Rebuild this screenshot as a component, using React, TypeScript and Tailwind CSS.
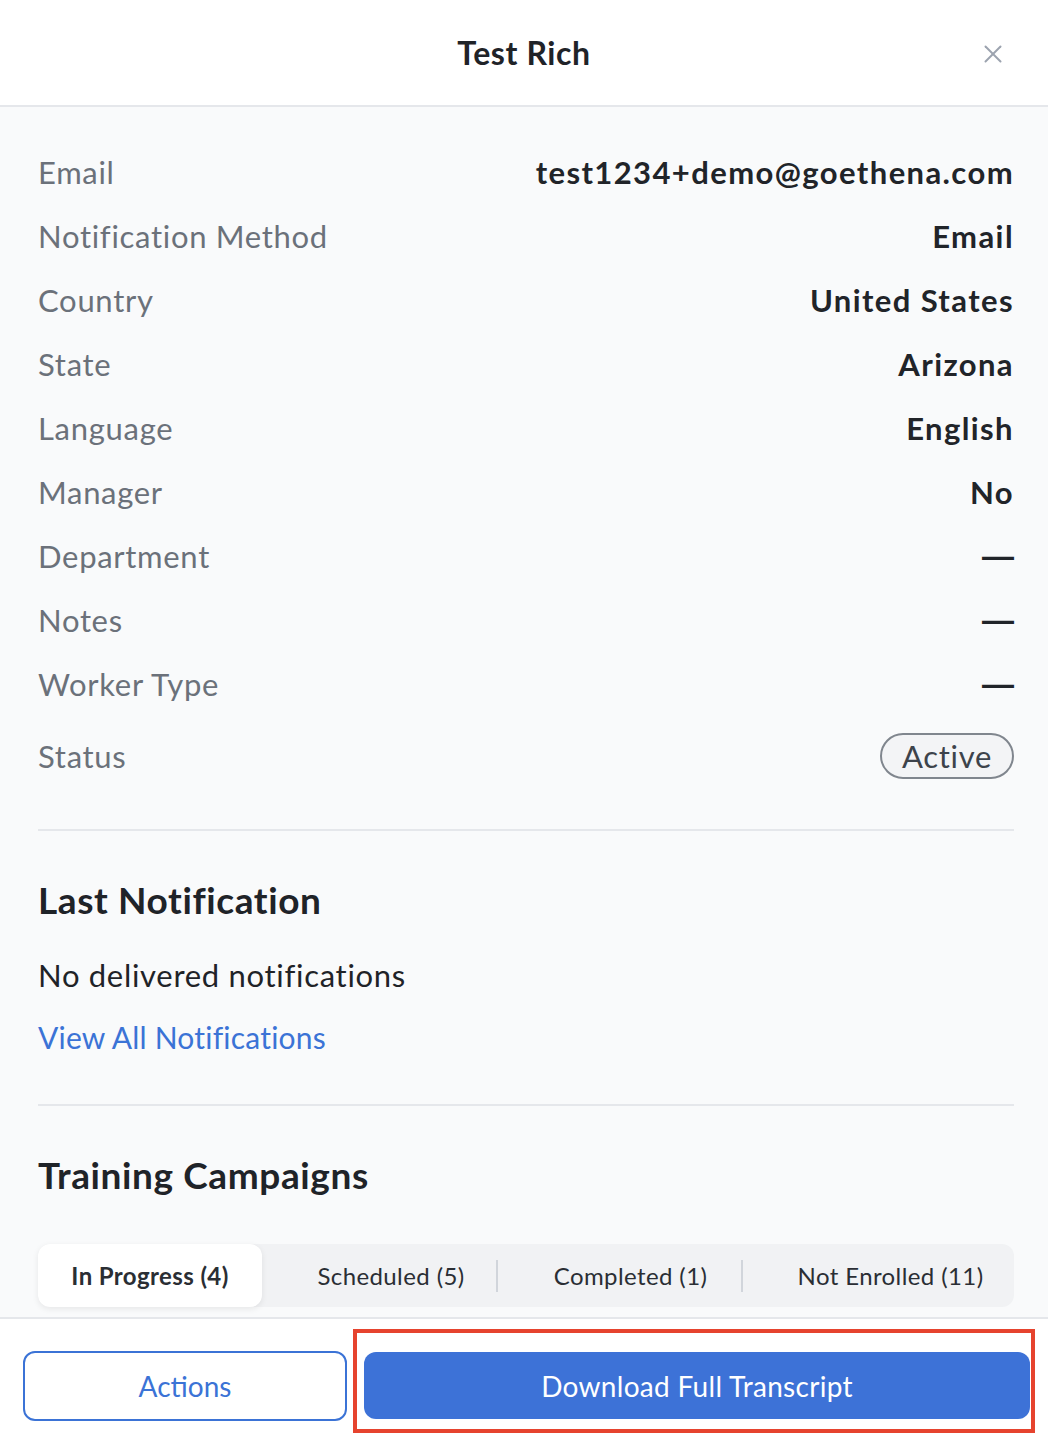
import { X } from 'lucide-react';

const rows: Array<{ label: string; value: string }> = [
  { label: 'Email', value: 'test1234+demo@goethena.com' },
  { label: 'Notification Method', value: 'Email' },
  { label: 'Country', value: 'United States' },
  { label: 'State', value: 'Arizona' },
  { label: 'Language', value: 'English' },
  { label: 'Manager', value: 'No' },
  { label: 'Department', value: '—' },
  { label: 'Notes', value: '—' },
  { label: 'Worker Type', value: '—' },
];

const font = { fontFamily: 'Lato, "Noto Sans", sans-serif' };

const App = () => {
  return (
    <div className="flex flex-col w-[1048px] h-[1442px] overflow-hidden bg-white" style={font}>
      {/* header */}
      <header className="relative flex items-center justify-center h-[107px] shrink-0 border-b-2 border-[#e5e7eb] bg-white">
        <h1 className="text-[32px] font-bold text-[#1f2328] tracking-[0.6px]">Test Rich</h1>
        <button className="absolute right-[40px] top-[39px] text-[#9ca3af]">
          <X size={30} strokeWidth={1.6} />
        </button>
      </header>

      {/* body */}
      <main className="flex-1 overflow-hidden bg-[#f9fafb] pl-[38px] pr-[34px] pt-[33px]">
        {rows.map((r) => (
          <div key={r.label} className="flex items-center justify-between h-16">
            <span className="text-[31px] tracking-[0.7px] text-[#6b717a]">{r.label}</span>
            {r.value === '—' ? (
              <span className="text-[32px] font-bold text-[#212429] font-['Liberation_Sans',sans-serif]">—</span>
            ) : (
              <span className="text-[31px] font-bold tracking-[1.4px] text-[#212429]">{r.value}</span>
            )}
          </div>
        ))}
        <div className="flex items-center justify-between h-20">
          <span className="text-[31px] tracking-[0.7px] text-[#6b717a]">Status</span>
          <span className="flex items-center h-[46px] px-[20px] rounded-full border-2 border-[#80868e] bg-[#f3f4f6] text-[31px] tracking-[0.7px] text-[#3d434b]">
            Active
          </span>
        </div>

        <div className="mt-[33px] h-[2px] bg-[#e5e7eb]" />

        <h2 className="mt-[47px] text-[37px] leading-[44px] font-bold tracking-[0.6px] text-[#1f2328]">Last Notification</h2>
        <p className="mt-[33px] text-[31px] leading-[40px] tracking-[0.7px] text-[#1f2328]">No delivered notifications</p>
        <a className="block mt-[22px] text-[30px] leading-[40px] tracking-[0.2px] text-[#3b73d6]">View All Notifications</a>

        <div className="mt-[47px] h-[2px] bg-[#e5e7eb]" />

        <h2 className="mt-[47px] text-[37px] leading-[44px] font-bold tracking-[0.6px] text-[#1f2328]">Training Campaigns</h2>

        <div className="mt-[47px] flex items-center h-[63px] rounded-[12px] bg-[#f1f2f4] text-[24px] tracking-[0.4px] text-[#2a2e34]">
          <div className="flex items-center justify-center w-[224px] h-full rounded-[12px] bg-white font-bold shadow-[0_2px_6px_rgba(0,0,0,0.08)]">
            In Progress (4)
          </div>
          <div className="flex items-center justify-center w-[234px] h-full pl-[24px]">Scheduled (5)</div>
          <div className="w-[2px] h-[32px] bg-[#d1d5db]" />
          <div className="flex items-center justify-center w-[243px] h-full pl-[22px]">Completed (1)</div>
          <div className="w-[2px] h-[32px] bg-[#d1d5db]" />
          <div className="flex items-center justify-center flex-1 h-full pl-[24px]">Not Enrolled (11)</div>
        </div>
      </main>

      {/* footer */}
      <footer className="flex items-start h-[125px] shrink-0 border-t-2 border-[#e5e7eb] bg-white pl-[23px]">
        <button className="mt-[32px] w-[324px] h-[70px] rounded-[12px] border-2 border-[#3b73d6] text-[28px] text-[#3b73d6]">
          Actions
        </button>
        <div className="ml-[6px] mt-[10px] w-[682px] h-[104px] border-4 border-[#e6432e] pt-[19px] pl-[7px] pr-[1px]">
          <button className="w-full h-[67px] rounded-[12px] bg-[#3d72d7] text-[28px] tracking-[0.3px] text-white">
            Download Full Transcript
          </button>
        </div>
      </footer>
    </div>
  );
};

export default App;
